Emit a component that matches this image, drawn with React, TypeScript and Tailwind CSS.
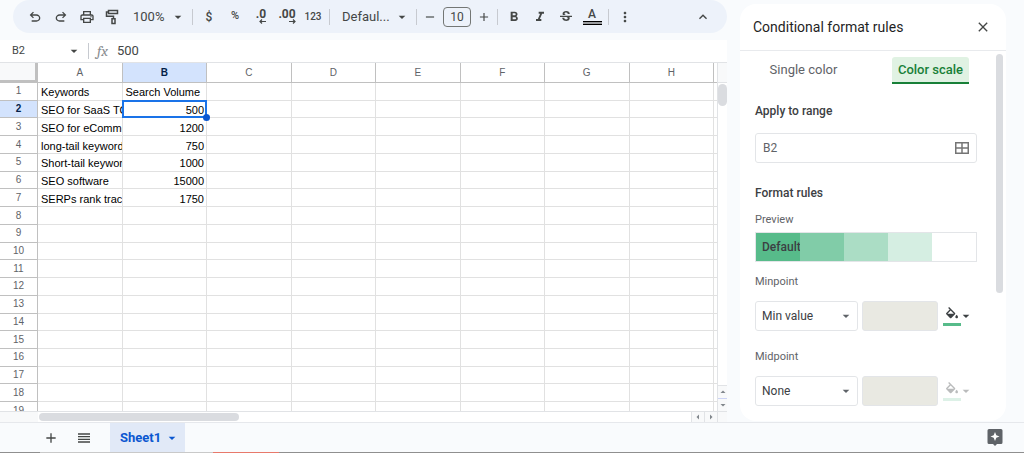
import { useState } from 'react'
import type { ReactNode } from 'react'
import {
  MdAdd,
  MdArrowDropDown,
  MdClose,
  MdFormatBold,
  MdFormatItalic,
  MdKeyboardArrowUp,
  MdMoreVert,
  MdOutlinePrint,
  MdRemove,
  MdReorder,
  MdStrikethroughS,
} from 'react-icons/md'

const COLUMNS = ['A', 'B', 'C', 'D', 'E', 'F', 'G', 'H']
const ROW_COUNT = 19

const DATA: string[][] = [
  ['Keywords', 'Search Volume'],
  ['SEO for SaaS TOFU', '500'],
  ['SEO for eCommerce', '1200'],
  ['long-tail keywords', '750'],
  ['Short-tail keywords', '1000'],
  ['SEO software', '15000'],
  ['SERPs rank tracker', '1750'],
]

function ToolButton({ label, children }: { label: string; children: ReactNode }) {
  return (
    <button type="button" aria-label={label} className="flex h-6 w-[26px] shrink-0 items-center justify-center">
      {children}
    </button>
  )
}

function Divider() {
  return <span className="h-4 w-px shrink-0 bg-[#c7cad0]" />
}

function UndoIcon({ flip = false }: { flip?: boolean }) {
  return (
    <svg viewBox="0 -960 960 960" className="size-4" fill="currentColor">
      {flip ? (
        <path d="M396-200q-97 0-166.500-63T160-420q0-94 69.500-157T396-640h252L544-744l56-56 200 200-200 200-56-56 104-104H396q-63 0-109.500 40T240-420q0 60 46.500 100T396-280h284v80H396Z" />
      ) : (
        <path d="M280-200v-80h284q63 0 109.500-40T720-420q0-60-46.500-100T564-560H312l104 104-56 56-200-200 200-200 56 56-104 104h252q97 0 166.500 63T800-420q0 94-69.500 157T564-200H280Z" />
      )}
    </svg>
  )
}

function PaintRollerIcon() {
  return (
    <svg viewBox="0 0 16 16" className="size-4" fill="none" stroke="currentColor" strokeWidth="1.500">
      <path d="M3.500 1.500h9v3h-9z" />
      <path d="M3.500 3H1.500v4.200h7v2.300" />
      <path d="M7 9.700h3v4.800H7z" />
    </svg>
  )
}

function BucketIcon() {
  return (
    <svg viewBox="0 0 24 18" className="h-3 w-4" fill="currentColor">
      <path d="M16.560 8.940L7.620 0 6.210 1.410l2.380 2.380-5.150 5.150c-.59.59-.59 1.540 0 2.120l5.500 5.500c.29.29.68.44 1.060.44s.77-.15 1.060-.44l5.500-5.500c.59-.58.59-1.530 0-2.120zM5.210 10L10 5.210 14.790 10H5.210zM19 11.500s-2 2.170-2 3.500c0 1.100.9 2 2 2s2-.9 2-2c0-1.330-2-3.500-2-3.500z" />
    </svg>
  )
}

// Number with a small arrow under its last digit
function DecimalIcon({ text, direction }: { text: string; direction: 'left' | 'right' }) {
  return (
    <span className="flex flex-col items-end">
      <span className="text-xs leading-[10px] font-bold">{text}</span>
      <svg viewBox="0 0 7 5" className="h-[5px] w-[7px]" fill="none" stroke="currentColor" strokeWidth="1.200">
        {direction === 'left' ? <path d="M7 2.500H1M3 .5l-2 2 2 2" /> : <path d="M0 2.500h6M4 .5l2 2-2 2" />}
      </svg>
    </span>
  )
}

function Toolbar() {
  return (
    <div className="ml-[13px] flex h-[33px] items-center rounded-full bg-[#edf2fa] pl-[9px] text-[#444746]">
      <ToolButton label="Undo"><UndoIcon /></ToolButton>
      <ToolButton label="Redo"><UndoIcon flip /></ToolButton>
      <ToolButton label="Print"><MdOutlinePrint className="size-4" /></ToolButton>
      <ToolButton label="Paint format"><PaintRollerIcon /></ToolButton>
      <button type="button" className="flex w-[66px] shrink-0 items-center justify-between pr-[6px] pl-[7px] text-[13px]">
        100%
        <MdArrowDropDown className="size-4" />
      </button>
      <Divider />
      <div className="flex shrink-0 px-[3px] font-medium">
        <ToolButton label="Format as currency"><span className="text-xs">$</span></ToolButton>
        <ToolButton label="Format as percent"><span className="text-[11px]">%</span></ToolButton>
        <ToolButton label="Decrease decimal places"><DecimalIcon text=".0" direction="left" /></ToolButton>
        <ToolButton label="Increase decimal places"><DecimalIcon text=".00" direction="right" /></ToolButton>
        <ToolButton label="More formats"><span className="text-[10px]">123</span></ToolButton>
      </div>
      <Divider />
      <button type="button" className="flex w-[86px] shrink-0 items-center justify-between pr-[6px] pl-3 text-[13px]">
        Defaul...
        <MdArrowDropDown className="size-4" />
      </button>
      <Divider />
      <ToolButton label="Decrease font size"><MdRemove className="size-[14px]" /></ToolButton>
      <input
        aria-label="Font size"
        defaultValue="10"
        className="h-5 w-7 shrink-0 rounded border border-[#747775] bg-transparent text-center text-xs"
      />
      <ToolButton label="Increase font size"><MdAdd className="size-[14px]" /></ToolButton>
      <Divider />
      <div className="flex shrink-0 px-[3px]">
        <ToolButton label="Bold"><MdFormatBold className="size-4" /></ToolButton>
        <ToolButton label="Italic"><MdFormatItalic className="size-4" /></ToolButton>
        <ToolButton label="Strikethrough"><MdStrikethroughS className="size-4" /></ToolButton>
        <ToolButton label="Text color">
          <span className="flex w-[19px] flex-col items-center gap-px">
            <span className="text-xs leading-3 font-medium">A</span>
            <span className="h-1 w-full border-y border-black bg-[#9a9c9f]" />
          </span>
        </ToolButton>
      </div>
      <Divider />
      <div className="flex flex-1 justify-between pr-[11px] pl-[3px]">
        <ToolButton label="More"><MdMoreVert className="size-4" /></ToolButton>
        <ToolButton label="Hide the menus"><MdKeyboardArrowUp className="size-4" /></ToolButton>
      </div>
    </div>
  )
}

function FormulaBar() {
  return (
    <div className="mt-[7px] flex h-[22px] items-center bg-white text-[#444746]">
      <button type="button" className="flex w-[88px] items-center justify-between pr-[6px] pl-3 text-[11px]">
        B2
        <MdArrowDropDown className="size-4" />
      </button>
      <Divider />
      <label htmlFor="formula" className="w-7 pl-2 font-serif text-[15px] text-[#8a8d91] italic">fx</label>
      <input id="formula" defaultValue="500" className="min-w-0 flex-1 text-[13px] outline-none" />
    </div>
  )
}

function Grid() {
  return (
    <div className="flex min-h-0 flex-1 border-t border-[#e1e3e6] bg-white">
      <div className="flex min-w-0 flex-1 flex-col">
        <div className="min-h-0 flex-1 overflow-hidden">
          <table className="h-[357px] w-full table-fixed border-separate border-spacing-0 font-['Liberation_Sans',Arial,sans-serif] text-[11px] text-black">
            <colgroup>
              <col className="w-[38px]" />
              {COLUMNS.map((c) => <col key={c} />)}
              <col className="w-[3px]" />
            </colgroup>
            <thead>
              <tr className="h-5 text-[10px] text-[#5f6368]">
                <th className="border-r-[3px] border-b-[3px] border-[#c0c0c0] bg-[#f8f9fa] p-0" />
                {COLUMNS.map((c) => (
                  <th
                    key={c}
                    scope="col"
                    className={
                      c === 'B'
                        ? 'border-r border-b border-[#c0c0c0] bg-[#d3e3fd] p-0 font-bold text-[#041e49]'
                        : 'border-r border-b border-[#c0c0c0] p-0 font-normal'
                    }
                  >
                    {c}
                  </th>
                ))}
                <th className="border-b border-[#c0c0c0] p-0" />
              </tr>
            </thead>
            <tbody>
              {Array.from({ length: ROW_COUNT }, (_, r) => (
                <tr key={r}>
                  <th
                    scope="row"
                    className={
                      r === 1
                        ? 'border-r border-b border-[#c0c0c0] bg-[#d3e3fd] p-0 text-[10px] leading-4 font-bold text-[#041e49]'
                        : 'border-r border-b border-[#c0c0c0] p-0 text-[10px] leading-4 font-normal text-[#5f6368]'
                    }
                  >
                    {r + 1}
                  </th>
                  {COLUMNS.map((c, i) => {
                    const value = DATA[r]?.[i] ?? ''
                    if (r === 1 && c === 'B') {
                      return (
                        <td key={c} className="relative border-r border-b border-[#e1e1e1] px-[2px] pt-[2px] pb-0 text-right leading-[14px]">
                          {value}
                          <span className="absolute -inset-px border-2 border-[#1a73e8]" />
                          <span className="absolute -right-1 -bottom-1 size-[7px] rounded-full bg-[#0b57d0]" />
                        </td>
                      )
                    }
                    return (
                      <td
                        key={c}
                        className={
                          i === 1 && r > 0
                            ? 'overflow-hidden border-r border-b border-[#e1e1e1] px-[2px] pt-[2px] pb-0 text-right leading-[14px] whitespace-nowrap'
                            : 'overflow-hidden border-r border-b border-[#e1e1e1] pt-[2px] pr-0 pb-0 pl-[3px] leading-[14px] whitespace-nowrap'
                        }
                      >
                        {value}
                      </td>
                    )
                  })}
                  <td className="border-b border-[#e1e1e1] p-0" />
                </tr>
              ))}
            </tbody>
          </table>
        </div>
        <div className="flex h-[11px] items-center border-t border-[#e1e3e6]">
          <span className="h-full w-[38px] bg-[#f8f9fa]" />
          <span className="ml-px h-2 w-[200px] rounded-full bg-[#dadce0]" />
          <button type="button" aria-label="Scroll left" className="ml-auto flex h-full w-[13px] items-center justify-center border-l border-[#e1e3e6] bg-[#f8f9fa] text-[#80868b]">
            <MdArrowDropDown className="size-3 rotate-90" />
          </button>
          <button type="button" aria-label="Scroll right" className="flex h-full w-[13px] items-center justify-center border-l border-[#e1e3e6] bg-[#f8f9fa] text-[#80868b]">
            <MdArrowDropDown className="size-3 -rotate-90" />
          </button>
        </div>
      </div>
      <div className="flex w-[10px] flex-col border-l border-[#e1e3e6]">
        <span className="h-5 border-b border-[#e1e3e6] bg-[#f8f9fa]" />
        <span className="mt-px h-[22px] rounded-full bg-[#dadce0]" />
        <button type="button" aria-label="Scroll up" className="mt-auto flex h-[13px] items-center justify-center border-t border-[#e1e3e6] bg-[#f8f9fa] text-[#80868b]">
          <MdArrowDropDown className="size-3 shrink-0 rotate-180" />
        </button>
        <button type="button" aria-label="Scroll down" className="flex h-[13px] items-center justify-center border-t border-[#ccd3f5] bg-[#f8f9fa] text-[#80868b]">
          <MdArrowDropDown className="size-3 shrink-0" />
        </button>
        <span className="h-[11px] border-t border-[#e1e3e6] bg-[#f8f9fa]" />
      </div>
    </div>
  )
}

function PointRow({ id, label, value, active }: { id: string; label: string; value: string; active: boolean }) {
  return (
    <div className="mb-[18px]">
      <label htmlFor={id} className="block text-[11px] leading-4 text-[#5f6368]">{label}</label>
      <div className="mt-[11px] flex h-[30px] items-center">
        <div className="relative h-full w-[103px]">
          <select
            id={id}
            defaultValue={value}
            className="h-full w-full appearance-none rounded-[3px] border border-[#e3e5e8] bg-white pl-[6px] text-xs text-[#3c4043]"
          >
            <option>None</option>
            <option>Min value</option>
            <option>Number</option>
            <option>Percent</option>
          </select>
          <MdArrowDropDown className="pointer-events-none absolute top-[7px] right-1 size-4 text-[#5f6368]" />
        </div>
        <input
          aria-label={`${label} value`}
          disabled
          className="ml-1 h-full w-[76px] rounded-[3px] border border-[#e3e5e8] bg-[#e9e9e2]"
        />
        <button
          type="button"
          aria-label={`${label} color`}
          disabled={!active}
          className="ml-[5px] flex items-center text-[#3c4043] disabled:opacity-35"
        >
          <span className="flex w-[18px] flex-col items-center gap-1">
            <BucketIcon />
            <span className={active ? 'h-[3px] w-full bg-[#57bb8a]' : 'h-[3px] w-full bg-[#9fdabd]'} />
          </span>
          <MdArrowDropDown className="-ml-[3px] size-4" />
        </button>
      </div>
    </div>
  )
}

function RulesPanel() {
  const [tab, setTab] = useState('scale')
  const on = 'h-[27px] w-[77px] rounded-t-[3px] border-b-2 border-[#188038] bg-[#e0f2e3] font-medium text-[#188038]'
  const off = 'h-[27px] w-[77px] border-b-2 border-transparent text-[#5f6368]'

  return (
    <aside className="mt-1 mb-px flex w-[266px] shrink-0 flex-col overflow-hidden rounded-2xl bg-white">
      <header className="flex h-[47px] shrink-0 items-center justify-between border-b border-[#e8eaed] pr-[15px] pl-[13px]">
        <h2 className="text-sm text-[#1f1f1f]">Conditional format rules</h2>
        <button type="button" aria-label="Close" className="text-[#444746]"><MdClose className="size-4" /></button>
      </header>
      <div className="flex min-h-0 flex-1">
        <div className="min-w-0 flex-1 overflow-hidden pt-[6px] pr-[19px] pl-[15px]">
          <div role="tablist" className="flex justify-between pr-2 pl-[10px] text-[13px]">
            <button type="button" role="tab" aria-selected={tab === 'single'} onClick={() => setTab('single')} className={tab === 'single' ? on : off}>
              Single color
            </button>
            <button type="button" role="tab" aria-selected={tab === 'scale'} onClick={() => setTab('scale')} className={tab === 'scale' ? on : off}>
              Color scale
            </button>
          </div>

          <label htmlFor="range" className="mt-[19px] block text-xs leading-4 font-medium text-[#3c4043]">Apply to range</label>
          <div className="mt-[14px] flex h-[30px] items-center rounded-[3px] border border-[#e3e5e8] px-[7px]">
            <input id="range" defaultValue="B2" className="min-w-0 flex-1 text-xs text-[#5f6368] outline-none" />
            <button type="button" aria-label="Select data range" className="text-[#757575]">
              <svg viewBox="0 0 14 12" className="h-3 w-[14px]" fill="none" stroke="currentColor" strokeWidth="1.500">
                <path d="M.75.75h12.500v10.500H.75zM7 .75v10.500M.75 6h12.500" />
              </svg>
            </button>
          </div>

          <h3 className="mt-[22px] text-xs leading-4 font-medium text-[#3c4043]">Format rules</h3>
          <p className="mt-[11px] text-[11px] leading-4 text-[#5f6368]">Preview</p>
          <button type="button" className="mt-1 mb-3 grid h-[30px] w-full grid-cols-5 border border-[#e3e5e8] text-left text-xs font-medium text-[#3c4043]">
            <span className="flex h-full items-center bg-[#57bb8a] pl-[6px]">Default</span>
            <span className="h-full bg-[#81cca8]" />
            <span className="h-full bg-[#abddc5]" />
            <span className="h-full bg-[#d5eee2]" />
            <span className="h-full bg-white" />
          </button>

          <PointRow id="minpoint" label="Minpoint" value="Min value" active />
          <PointRow id="midpoint" label="Midpoint" value="None" active={false} />
        </div>
        <span className="mt-[3px] mr-[3px] h-[239px] w-[7px] rounded-full bg-[#dadce0]" />
      </div>
    </aside>
  )
}

function SheetTabs() {
  return (
    <footer className="flex h-[31px] shrink-0 flex-col border-t border-[#e6e8ec] text-[#444746]">
      <div className="flex flex-1 items-center pr-[21px] pl-[43px]">
        <button type="button" aria-label="Add sheet"><MdAdd className="size-4" /></button>
        <button type="button" aria-label="All sheets" className="ml-[17px]"><MdReorder className="size-4" /></button>
        <button type="button" className="ml-[18px] flex h-full w-[75px] items-center justify-between bg-[#e1e9f7] pr-[5px] pl-[10px] text-[13px] font-bold text-[#0b57d0]">
          Sheet1
          <MdArrowDropDown className="size-4" />
        </button>
        <button type="button" aria-label="Explore" className="ml-auto text-[#5f6368]">
          <svg viewBox="0 0 16 17" className="h-[17px] w-4" fill="currentColor">
            <path d="M2 0h12a1.500 1.500 0 0 1 1.500 1.500v12A1.500 1.500 0 0 1 14 15h-4l-2 2-2-2H2A1.500 1.500 0 0 1 .5 13.500v-12A1.500 1.500 0 0 1 2 0z" />
            <path fill="#fff" d="M8 3l1.300 3.200L12.500 7.500 9.300 8.800 8 12 6.700 8.800 3.500 7.500l3.200-1.300z" />
          </svg>
        </button>
      </div>
      <div className="flex h-px bg-[#8f8f8f]">
        <span className="w-10" />
        <span className="w-[173px] bg-[#c9c9c9]" />
        <span className="w-[66px] bg-[#e8796b]" />
      </div>
    </footer>
  )
}

export default function App() {
  return (
    <div className="flex h-screen flex-col bg-[#f9fbfd] font-[Roboto,sans-serif]">
      <div className="flex min-h-0 flex-1 gap-[13px] pr-[18px]">
        <main className="flex min-w-0 flex-1 flex-col">
          <Toolbar />
          <FormulaBar />
          <Grid />
        </main>
        <RulesPanel />
      </div>
      <SheetTabs />
    </div>
  )
}
